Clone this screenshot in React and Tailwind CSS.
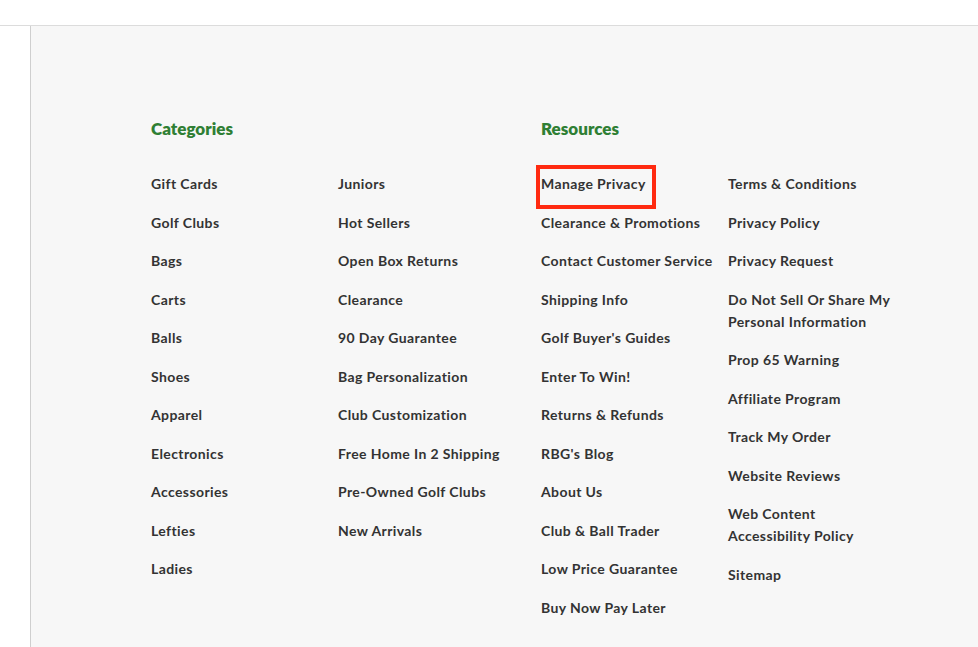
import React from "react";

const categoriesLeft = ["Gift Cards", "Golf Clubs", "Bags", "Carts", "Balls", "Shoes", "Apparel", "Electronics", "Accessories", "Lefties", "Ladies"];
const categoriesRight = ["Juniors", "Hot Sellers", "Open Box Returns", "Clearance", "90 Day Guarantee", "Bag Personalization", "Club Customization", "Free Home In 2 Shipping", "Pre-Owned Golf Clubs", "New Arrivals"];
const resourcesLeft = ["Manage Privacy", "Clearance & Promotions", "Contact Customer Service", "Shipping Info", "Golf Buyer's Guides", "Enter To Win!", "Returns & Refunds", "RBG's Blog", "About Us", "Club & Ball Trader", "Low Price Guarantee", "Buy Now Pay Later"];
const resourcesRight = ["Terms & Conditions", "Privacy Policy", "Privacy Request", "Do Not Sell Or Share My Personal Information", "Prop 65 Warning", "Affiliate Program", "Track My Order", "Website Reviews", "Web Content Accessibility Policy", "Sitemap"];

function LinkList({ items, highlight, width }) {
    return (
        <ul className={"flex flex-col gap-[16.5px] " + width}>
            {items.map((item) => (
                <li key={item} className="text-[14px] leading-[22px] font-bold tracking-[0.4px] text-[#333]">
                    {item === highlight ? (
                        <span className="relative inline-block">
                            {item}
                            <span className="absolute left-[-5px] right-[-10px] top-[-8px] bottom-[-14px] border-4 border-[#ff2a10]"></span>
                        </span>
                    ) : (
                        item
                    )}
                </li>
            ))}
        </ul>
    );
}

function Section({ title, children, width }) {
    return (
        <div className={width}>
            <h3 className="text-[17px] leading-[24px] font-extrabold text-[#2f7f34] mb-[32px]">{title}</h3>
            <div className="flex">{children}</div>
        </div>
    );
}

export default function App() {
    return (
        <div className="w-[978px] h-[647px] overflow-hidden bg-white flex flex-col" style={{ fontFamily: "Lato, 'Noto Sans', sans-serif" }}>
            <div className="h-[26px] border-b border-[#dcdcdc] shrink-0"></div>
            <div className="flex flex-1">
                <div className="w-[31px] border-r border-[#cfcfcf] shrink-0"></div>
                <div className="flex-1 bg-[#f7f7f7] pl-[120px] pt-[91px] flex">
                    <Section title="Categories" width="w-[390px]">
                        <LinkList items={categoriesLeft} width="w-[187px]" />
                        <LinkList items={categoriesRight} width="w-[187px]" />
                    </Section>
                    <Section title="Resources" width="flex-1">
                        <LinkList items={resourcesLeft} highlight="Manage Privacy" width="w-[187px]" />
                        <LinkList items={resourcesRight} width="w-[170px]" />
                    </Section>
                </div>
            </div>
        </div>
    );
}
